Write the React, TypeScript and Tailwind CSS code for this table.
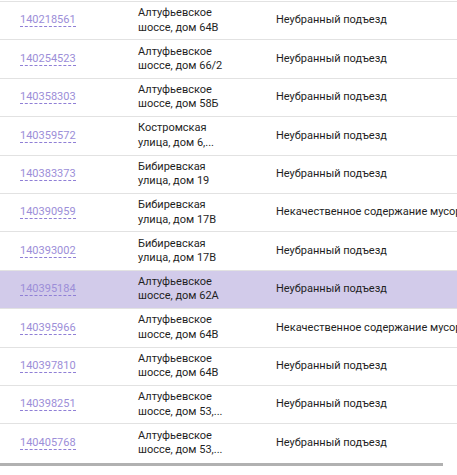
import React from "react";

const rows = [
  { id: "140218561", a: ["Алтуфьевское", "шоссе, дом 64В"], d: "Неубранный подъезд" },
  { id: "140254523", a: ["Алтуфьевское", "шоссе, дом 66/2"], d: "Неубранный подъезд" },
  { id: "140358303", a: ["Алтуфьевское", "шоссе, дом 58Б"], d: "Неубранный подъезд" },
  { id: "140359572", a: ["Костромская", "улица, дом 6,..."], d: "Неубранный подъезд" },
  { id: "140383373", a: ["Бибиревская", "улица, дом 19"], d: "Неубранный подъезд" },
  { id: "140390959", a: ["Бибиревская", "улица, дом 17В"], d: "Некачественное содержание мусоропровода" },
  { id: "140393002", a: ["Бибиревская", "улица, дом 17В"], d: "Неубранный подъезд" },
  { id: "140395184", a: ["Алтуфьевское", "шоссе, дом 62А"], d: "Неубранный подъезд", active: true },
  { id: "140395966", a: ["Алтуфьевское", "шоссе, дом 64В"], d: "Некачественное содержание мусоропровода" },
  { id: "140397810", a: ["Алтуфьевское", "шоссе, дом 64В"], d: "Неубранный подъезд" },
  { id: "140398251", a: ["Алтуфьевское", "шоссе, дом 53,..."], d: "Неубранный подъезд" },
  { id: "140405768", a: ["Алтуфьевское", "шоссе, дом 53,..."], d: "Неубранный подъезд" },
];

export default function App() {
  return (
    <div className="w-[457px] h-[475px] bg-white overflow-hidden font-['Roboto',sans-serif] text-[11px] text-[#1f1f1f]">
      <div className="pt-px">
        {rows.map((r) => (
          <div
            key={r.id}
            className={
              "flex items-center h-[38.4px] border-t border-[#e2e2e2] whitespace-nowrap " +
              (r.active ? "bg-[#d2cbea]" : "bg-white")
            }
          >
            <div className="w-[138px] shrink-0 pl-5">
              <span className="text-[#9c8ed8] border-b border-dashed border-[#8f7fd6] leading-[15px]">
                {r.id}
              </span>
            </div>
            <div className="w-[138px] shrink-0 leading-[14.4px]">
              <div>{r.a[0]}</div>
              <div>{r.a[1]}</div>
            </div>
            <div className="shrink-0">{r.d}</div>
          </div>
        ))}
        <div className="h-[3px] w-[443px] bg-[#b1b1b1] mt-px" />
      </div>
    </div>
  );
}
